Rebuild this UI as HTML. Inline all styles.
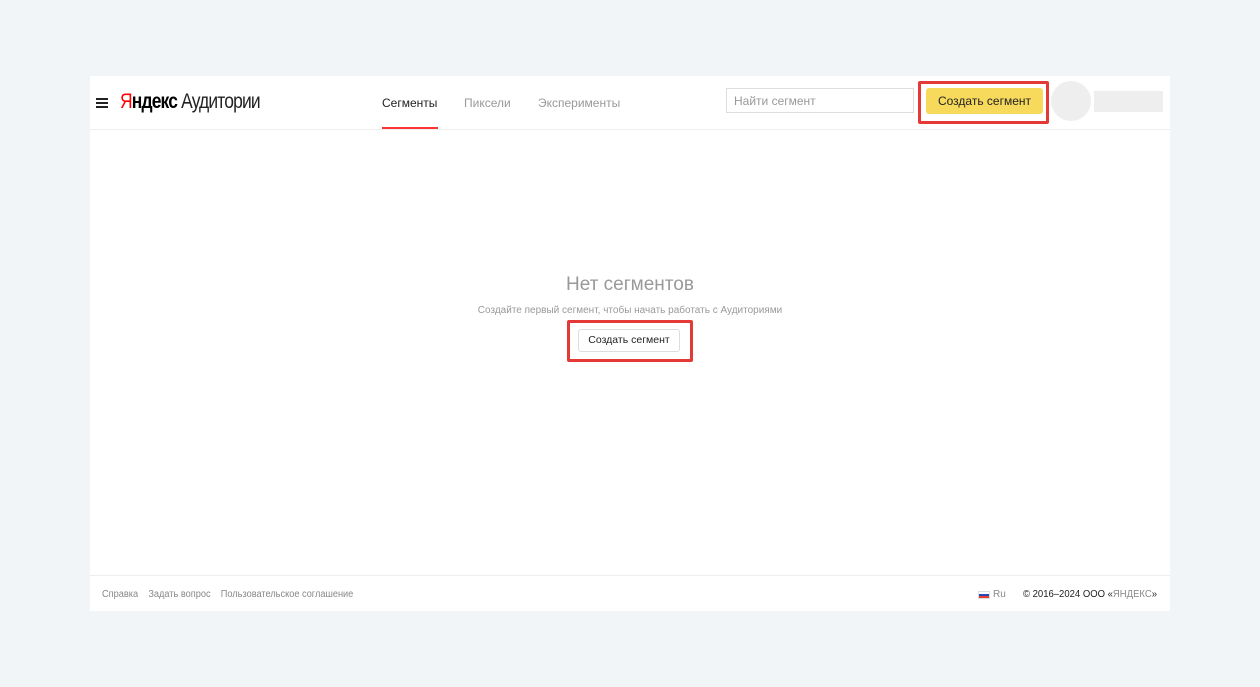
<!DOCTYPE html>
<html><head><meta charset="utf-8"><style>
*{margin:0;padding:0;box-sizing:border-box}
body{width:1260px;height:687px;background:#f2f5f8;font-family:"Liberation Sans",sans-serif;position:relative;overflow:hidden}
.a{position:absolute}
.card{left:90px;top:76px;width:1080px;height:535px;background:#fff}
.hd{left:90px;top:129px;width:1080px;height:1px;background:#eee}
.ft{left:90px;top:575px;width:1080px;height:1px;background:#eee}
.t{white-space:nowrap}
</style></head><body>
<div class="a card"></div>
<div class="a hd"></div>
<div class="a ft"></div>
<div class="a" style="left:96px;top:98px;width:12px;height:2px;background:#222;box-shadow:0 4px 0 #222,0 8px 0 #222"></div>
<div class="a t" style="left:120px;top:90px;font-size:21px;letter-spacing:-1px;transform:scaleX(0.83);transform-origin:left"><span style="color:#f00">Я</span><span style="color:#000;font-weight:bold">ндекс</span> <span style="color:#222">Аудитории</span></div>
<div class="a t" style="left:382px;top:96px;font-size:12px;color:#222">Сегменты</div>
<div class="a" style="left:382px;top:127px;width:56px;height:2px;background:#f33"></div>
<div class="a t" style="left:464px;top:96px;font-size:12px;color:#999">Пиксели</div>
<div class="a t" style="left:538px;top:96px;font-size:12px;color:#999">Эксперименты</div>
<div class="a" style="left:726px;top:88px;width:188px;height:25px;border:1px solid #ddd"></div>
<div class="a t" style="left:734px;top:94px;font-size:12px;color:#999">Найти сегмент</div>
<div class="a" style="left:918px;top:81px;width:131px;height:43px;border:3px solid #e53935;border-radius:2px"></div>
<div class="a" style="left:926px;top:88px;width:117px;height:26px;background:#f7d95c;border-radius:3px"></div>
<div class="a t" style="left:926px;top:94px;width:117px;text-align:center;font-size:12px;color:#222">Создать сегмент</div>
<div class="a" style="left:1051px;top:81px;width:40px;height:40px;border-radius:50%;background:#eee"></div>
<div class="a" style="left:1094px;top:91px;width:69px;height:21px;background:#eee"></div>
<div class="a t" style="left:0;top:274px;width:1260px;text-align:center;font-size:19px;color:#999">Нет сегментов</div>
<div class="a t" style="left:0;top:305px;width:1260px;text-align:center;font-size:10px;color:#999">Создайте первый сегмент, чтобы начать работать с Аудиториями</div>
<div class="a" style="left:567px;top:320px;width:126px;height:42px;border:3px solid #e53935;border-radius:2px"></div>
<div class="a" style="left:578px;top:329px;width:102px;height:23px;border:1px solid #ddd;border-radius:3px"></div>
<div class="a t" style="left:578px;top:334px;width:102px;text-align:center;font-size:10.5px;color:#222">Создать сегмент</div>
<div class="a t" style="left:102px;top:589px;font-size:10px;color:#888;transform:scaleX(0.92);transform-origin:left">Справка&nbsp;&nbsp;&nbsp; Задать вопрос&nbsp;&nbsp;&nbsp; Пользовательское соглашение</div>
<div class="a" style="left:978px;top:591px;width:12px;height:8px;background:linear-gradient(#fff 33%,#2747b5 33% 66%,#e53935 66%);border:1px solid #ddd"></div>
<div class="a t" style="left:993px;top:589px;font-size:10px;color:#888">Ru</div>
<div class="a t" style="left:1023px;top:589px;font-size:10px;color:#222;transform:scaleX(0.95);transform-origin:left">© 2016–2024 ООО «<span style="color:#888">ЯНДЕКС</span>»</div>
</body></html>
